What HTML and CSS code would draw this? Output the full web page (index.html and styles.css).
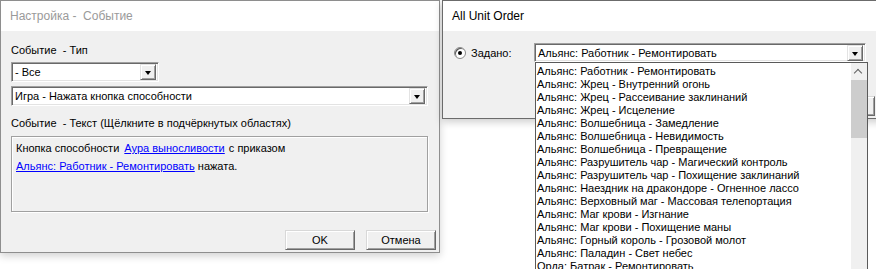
FILE: index.html
```html
<!DOCTYPE html>
<html lang="ru">
<head>
    <meta charset="UTF-8">
    <title>Настройка - Событие</title>
    <link rel="stylesheet" href="styles.css">
</head>
<body>
    <div class="desk">
        <div class="win win-event">
            <div class="titlebar inactive">Настройка -  Событие</div>
            <div class="win-body">
                <div class="label">Событие  - Тип</div>
                <div class="combo combo-small">
                    <span class="combo-text">- Все</span>
                    <span class="arrow"></span>
                </div>
                <div class="combo combo-wide">
                    <span class="combo-text">Игра - Нажата кнопка способности</span>
                    <span class="arrow"></span>
                </div>
                <div class="label label-text">Событие  - Текст (Щёлкните в подчёркнутых областях)</div>
                <div class="textbox">
                    <p>Кнопка способности <a href="#" class="first">Аура выносливости</a> с приказом</p>
                    <p><a href="#">Альянс: Работник - Ремонтировать</a> нажата.</p>
                </div>
                <div class="buttons">
                    <button class="btn">OK</button>
                    <button class="btn">Отмена</button>
                </div>
            </div>
        </div>

        <div class="win win-order">
            <div class="titlebar">All Unit Order</div>
            <div class="win-body">
                <div class="row">
                    <span class="radio"></span>
                    <span class="row-label">Задано:</span>
                    <div class="combo combo-order">
                        <span class="combo-text">Альянс: Работник - Ремонтировать</span>
                        <span class="arrow"></span>
                    </div>
                </div>
                <div class="buttons buttons-order">
                    <button class="btn">OK</button>
                </div>
            </div>
        </div>

        <div class="droplist">
            <ul class="items">
                <li>Альянс: Работник - Ремонтировать</li>
                <li>Альянс: Жрец - Внутренний огонь</li>
                <li>Альянс: Жрец - Рассеивание заклинаний</li>
                <li>Альянс: Жрец - Исцеление</li>
                <li>Альянс: Волшебница - Замедление</li>
                <li>Альянс: Волшебница - Невидимость</li>
                <li>Альянс: Волшебница - Превращение</li>
                <li>Альянс: Разрушитель чар - Магический контроль</li>
                <li>Альянс: Разрушитель чар - Похищение заклинаний</li>
                <li>Альянс: Наездник на дракондоре - Огненное лассо</li>
                <li>Альянс: Верховный маг - Массовая телепортация</li>
                <li>Альянс: Маг крови - Изгнание</li>
                <li>Альянс: Маг крови - Похищение маны</li>
                <li>Альянс: Горный король - Грозовой молот</li>
                <li>Альянс: Паладин - Свет небес</li>
                <li>Орда: Батрак - Ремонтировать</li>
            </ul>
            <div class="scrollbar">
                <span class="up"></span>
                <span class="thumb"></span>
            </div>
        </div>
    </div>
</body>
</html>
```

FILE: styles.css
```css
body {
    margin: 0;
    background: #ffffff;
    font-family: "Liberation Sans", Arial, sans-serif;
    font-size: 11px;
    color: #000;
}
.desk {
    position: relative;
    width: 876px;
    height: 269px;
    overflow: hidden;
}
.win {
    position: absolute;
    top: 0;
    box-sizing: border-box;
    background: #f0f0f0;
    display: flex;
    flex-direction: column;
}
.win-event {
    left: 0;
    width: 440px;
    height: 253px;
    border: 1px solid #8e8e8e;
    box-shadow: 0 3px 8px rgba(0, 0, 0, 0.18);
}
.win-order {
    left: 442px;
    width: 445px;
    height: 119px;
    border: 1px solid #6b6b6b;
    box-shadow: 0 3px 8px rgba(0, 0, 0, 0.2);
}
.titlebar {
    height: 30px;
    line-height: 30px;
    background: #ffffff;
    padding-left: 9px;
    font-size: 12px;
    white-space: pre;
    flex-shrink: 0;
}
.titlebar.inactive {
    color: #9a9a9a;
}
.win-body {
    flex: 1;
    padding: 0 10px;
    display: flex;
    flex-direction: column;
}
.win-event .win-body {
    padding-top: 13px;
}
.label {
    white-space: pre;
    line-height: 13px;
    height: 13px;
}
.label-text {
    margin-top: 11px;
}
.combo {
    box-sizing: border-box;
    height: 20px;
    background: #fff;
    border-top: 1px solid #a0a0a0;
    border-left: 1px solid #a0a0a0;
    border-right: 1px solid #ffffff;
    border-bottom: 1px solid #ffffff;
    box-shadow: inset 1px 1px 0 #696969, inset -1px -1px 0 #e3e3e3;
    display: flex;
    align-items: center;
    justify-content: space-between;
    padding: 0 2px 0 3px;
}
.combo-small {
    width: 148px;
    margin-top: 5px;
}
.combo-wide {
    width: 417px;
    margin-top: 4px;
}
.combo-text {
    line-height: 14px;
}
.arrow {
    box-sizing: border-box;
    width: 16px;
    height: 16px;
    background: #f0f0f0;
    border-top: 1px solid #e3e3e3;
    border-left: 1px solid #e3e3e3;
    border-right: 1px solid #696969;
    border-bottom: 1px solid #696969;
    box-shadow: inset 1px 1px 0 #ffffff, inset -1px -1px 0 #a0a0a0;
    position: relative;
}
.arrow::after {
    content: "";
    position: absolute;
    left: 4px;
    top: 6px;
    border-left: 3.5px solid transparent;
    border-right: 3.5px solid transparent;
    border-top: 4px solid #000;
}
.textbox {
    box-sizing: border-box;
    width: 417px;
    height: 76px;
    margin-top: 6px;
    border: 1px solid #a0a0a0;
    box-shadow: 1px 1px 0 #ffffff, inset 1px 1px 0 #ffffff;
    padding: 2px 4px;
}
.textbox p {
    margin: 0;
    line-height: 18px;
    white-space: nowrap;
}
.textbox a {
    color: #0000ff;
    text-decoration: underline;
}
.textbox a.first {
    margin-left: 2px;
    margin-right: 1px;
}
.buttons {
    display: flex;
    justify-content: flex-end;
    gap: 11px;
    margin-top: 18px;
    margin-right: -7px;
}
.btn {
    box-sizing: border-box;
    width: 70px;
    height: 20px;
    font-family: "Liberation Sans", Arial, sans-serif;
    font-size: 11px;
    background: #f0f0f0;
    border-top: 1px solid #d8d8d8;
    border-left: 1px solid #d8d8d8;
    border-right: 1px solid #696969;
    border-bottom: 1px solid #696969;
    box-shadow: inset 1px 1px 0 #ffffff, inset -1px -1px 0 #a0a0a0;
    padding: 0;
    color: #000;
}
.win-order .win-body {
    padding-top: 12px;
}
.row {
    display: flex;
    align-items: center;
    height: 19px;
}
.radio {
    box-sizing: border-box;
    width: 12px;
    height: 12px;
    border-radius: 50%;
    margin-left: 1px;
    background: #fff;
    border: 1px solid #8a8a8a;
    box-shadow: inset 1px 1px 0 #5a5a5a;
    position: relative;
}
.radio::after {
    content: "";
    position: absolute;
    left: 3px;
    top: 3px;
    width: 4px;
    height: 4px;
    border-radius: 50%;
    background: #000;
}
.row-label {
    margin-left: 5px;
    width: 63px;
}
.combo-order {
    width: 332px;
    height: 19px;
}
.buttons-order {
    margin-top: 34px;
    margin-right: 1px;
}
.buttons-order .btn {
    width: 75px;
}
.droplist {
    position: absolute;
    left: 535px;
    top: 62px;
    width: 333px;
    height: 230px;
    box-sizing: border-box;
    background: #fff;
    border: 1px solid #5a5a5a;
    display: flex;
}
.items {
    list-style: none;
    margin: 0;
    padding: 2px 0 0 1px;
    flex: 1;
}
.items li {
    height: 13px;
    line-height: 13px;
    white-space: nowrap;
}
.scrollbar {
    width: 16px;
    background: #f0f0f0;
    display: flex;
    flex-direction: column;
    align-items: center;
}
.up {
    width: 16px;
    height: 17px;
    position: relative;
}
.up::after {
    content: "";
    position: absolute;
    left: 4px;
    top: 7px;
    width: 5px;
    height: 5px;
    border-left: 1.5px solid #606060;
    border-top: 1.5px solid #606060;
    transform: rotate(45deg);
}
.thumb {
    width: 16px;
    height: 58px;
    background: #cdcdcd;
}
```
